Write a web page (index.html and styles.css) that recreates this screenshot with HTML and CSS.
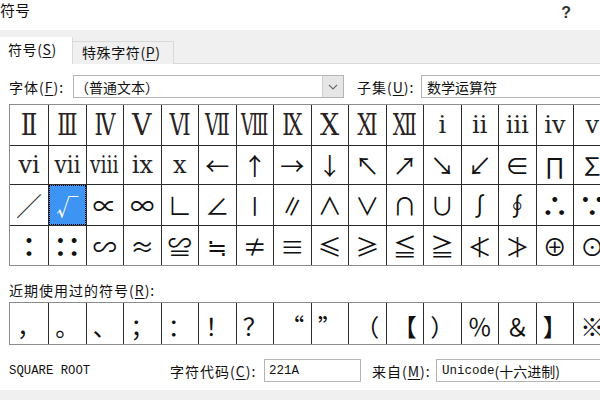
FILE: index.html
```html
<!DOCTYPE html>
<html lang="zh-CN">
<head>
<meta charset="utf-8">
<title>符号</title>
<link rel="stylesheet" href="styles.css">
</head>
<body>
<div class="dialog">
  <div class="titlebar">
    <span class="title">符号</span>
    <span class="help">?</span>
  </div>
  <div class="tabs">
    <div class="tab active">符号(<u>S</u>)</div>
    <div class="tab">特殊字符(<u>P</u>)</div>
  </div>
  <div class="panel">
    <div class="fontrow">
      <span class="lbl font-lbl">字体(<u>F</u>):</span>
      <div class="select font-select">
        <span class="sel-text">（普通文本）</span>
        <span class="drop"><svg width="10" height="6" viewBox="0 0 10 6"><polyline points="1,1 5,5 9,1" fill="none" stroke="#6b6b6b" stroke-width="1.1"/></svg></span>
      </div>
      <span class="lbl subset-lbl">子集(<u>U</u>):</span>
      <div class="field subset">数学运算符</div>
    </div>

    <div class="grid">
      <div class="c rn"><span class="s1">Ⅱ</span></div><div class="c rn"><span class="s2">Ⅲ</span></div><div class="c rn"><span class="s2">Ⅳ</span></div><div class="c rn"><span class="s0">Ⅴ</span></div><div class="c rn"><span class="s2">Ⅵ</span></div><div class="c rn"><span class="s3">Ⅶ</span></div><div class="c rn"><span class="s4">Ⅷ</span></div><div class="c rn"><span class="s2">Ⅸ</span></div><div class="c rn"><span class="s0">Ⅹ</span></div><div class="c rn"><span class="s2">Ⅺ</span></div><div class="c rn"><span class="s3">Ⅻ</span></div><div class="c rs">ⅰ</div><div class="c rs">ⅱ</div><div class="c rs">ⅲ</div><div class="c rs">ⅳ</div><div class="c rs">ⅴ</div>
      <div class="c rs">ⅵ</div><div class="c rs"><span class="t1">ⅶ</span></div><div class="c rs"><span class="t2">ⅷ</span></div><div class="c rs">ⅸ</div><div class="c rs">ⅹ</div><div class="c">←</div><div class="c">↑</div><div class="c">→</div><div class="c">↓</div><div class="c">↖</div><div class="c">↗</div><div class="c">↘</div><div class="c">↙</div><div class="c">∈</div><div class="c">∏</div><div class="c">∑</div>
      <div class="c slash">∕</div><div class="c sel"><span class="focus">√</span></div><div class="c">∝</div><div class="c">∞</div><div class="c">∟</div><div class="c">∠</div><div class="c bar">∣</div><div class="c">∥</div><div class="c">∧</div><div class="c">∨</div><div class="c">∩</div><div class="c">∪</div><div class="c">∫</div><div class="c">∮</div><div class="c dots">∴</div><div class="c dots">∵</div>
      <div class="c dots">∶</div><div class="c dots">∷</div><div class="c">∽</div><div class="c">≈</div><div class="c">≌</div><div class="c">≒</div><div class="c">≠</div><div class="c">≡</div><div class="c">≤</div><div class="c">≥</div><div class="c">≦</div><div class="c">≧</div><div class="c">≮</div><div class="c">≯</div><div class="c">⊕</div><div class="c">⊙</div>
    </div>

    <div class="lbl recent-lbl">近期使用过的符号(<u>R</u>):</div>
    <div class="recent">
      <div class="rc">，</div><div class="rc">。</div><div class="rc">、</div><div class="rc">；</div><div class="rc">：</div><div class="rc">！</div><div class="rc">？</div><div class="rc">“</div><div class="rc">”</div><div class="rc">（</div><div class="rc">【</div><div class="rc">）</div><div class="rc">％</div><div class="rc">＆</div><div class="rc">】</div><div class="rc">※</div>
    </div>

    <div class="info">
      <span class="charname">SQUARE ROOT</span>
      <span class="lbl code-lbl">字符代码(<u>C</u>):</span>
      <div class="field code">221A</div>
      <span class="lbl from-lbl">来自(<u>M</u>):</span>
      <div class="field from"><span class="mono">Unicode</span>(十六进制)</div>
    </div>
  </div>
  <div class="footer"></div>
</div>
</body>
</html>
```
FILE: styles.css
```css
* { box-sizing: border-box; margin: 0; padding: 0; }
html, body { width: 600px; height: 400px; overflow: hidden; background: #fff; }
body { font-family: "Noto Sans CJK SC", "Noto Sans", sans-serif; font-size: 14px; color: #111; }
u { text-decoration: underline; text-underline-offset: 2px; }

.dialog { width: 600px; height: 400px; display: flex; flex-direction: column; overflow: hidden; }

.titlebar { height: 30px; flex: none; display: flex; align-items: flex-start; justify-content: space-between; }
.title { font-size: 15px; line-height: 20px; }
.help { font-family: "Liberation Sans", sans-serif; font-weight: bold; font-size: 16px; line-height: 26px; color: #333; margin-right: 29px; }

.tabs { height: 34px; flex: none; background: #f0f0f0; border-bottom: 1px solid #d9d9d9; display: flex; align-items: flex-end; }
.tab { height: 23px; margin-bottom: -1px; border-top: 1px solid #d9d9d9; border-right: 1px solid #d9d9d9; background: #f0f0f0; font-size: 14px; line-height: 21px; padding-left: 9px; width: 101px; letter-spacing: 0.6px; }
.tab.active { height: 27px; width: 73px; background: #fff; padding-left: 8px; line-height: 25px; border-top: none; }

.panel { flex: 1; display: flex; flex-direction: column; padding-left: 9px; overflow: hidden; }

.fontrow { margin-top: 11px; height: 23px; display: flex; align-items: center; flex: none; }
.lbl { font-size: 14px; line-height: 20px; white-space: nowrap; flex: none; letter-spacing: 1px; }
.font-lbl { width: 64px; }
.select { height: 23px; border: 1px solid #b4b4b4; display: flex; align-items: center; flex: none; }
.font-select { width: 271px; justify-content: space-between; }
.sel-text { font-size: 14px; line-height: 20px; padding-left: 1px; }
.drop { width: 21px; height: 21px; background: #e6e6e6; border-left: 1px solid #cfcfcf; display: flex; align-items: center; justify-content: center; }
.subset-lbl { margin-left: 13px; width: 64px; }
.field { height: 23px; border: 1px solid #b4b4b4; flex: none; display: flex; align-items: center; }
.subset { width: 200px; padding-left: 5px; font-size: 14px; }

.grid { margin-top: 6px; width: max-content; flex: none; display: grid; grid-template-columns: 38px repeat(15, 36.5px); grid-template-rows: 40px 38px 40px 39px; gap: 1px; background: #2b2b2b; border: 1px solid #8c8c8c; }
.c { background: #fff; display: flex; align-items: center; justify-content: center; font-family: "Noto Sans CJK SC", sans-serif; font-size: 24px; line-height: 1; color: #111; overflow: hidden; }
.c span { display: inline-block; }
.c.rn { font-family: "DejaVu Serif", "Liberation Serif", serif; font-size: 30px; color: #2a2222; }
.rn .s0 { transform: scaleX(0.9); }
.rn .s1 { transform: scaleX(0.82); }
.rn .s2 { transform: scaleX(0.7); }
.rn .s3 { transform: scaleX(0.64); }
.rn .s4 { transform: scaleX(0.58); }
.c.rs { font-family: "DejaVu Serif", "Liberation Serif", serif; font-size: 24px; color: #222; }
.rs .t1 { transform: scaleX(0.9); }
.rs .t2 { transform: scaleX(0.78); }
.c.slash { font-size: 26px; color: #333; }
.c.bar { font-size: 26px; }
.c.dots { font-size: 28px; font-weight: bold; }
.c.sel { background: #3d94f2; color: #fff; padding: 0; font-size: 22px; }
.c.sel .focus { width: 100%; height: 100%; border: 1px dotted #000; display: flex; align-items: center; justify-content: center; }

.recent-lbl { margin-top: 14px; }
.recent { margin-top: 2px; width: max-content; flex: none; display: grid; grid-template-columns: 38px repeat(15, 36.5px); grid-template-rows: 41px; gap: 1px; background: #2b2b2b; border: 1px solid #8c8c8c; border-right: none; }
.rc { background: #fff; display: flex; align-items: flex-end; justify-content: center; font-family: "Noto Sans CJK SC", sans-serif; font-size: 24px; line-height: 36px; color: #111; }

.info { margin-top: 14px; height: 23px; display: flex; align-items: center; flex: none; }
.charname { font-family: "Liberation Mono", monospace; font-size: 12.3px; width: 161px; flex: none; }
.code-lbl { width: 94px; }
.code { width: 97px; padding-left: 4px; font-family: "Liberation Mono", monospace; font-size: 12.5px; }
.from-lbl { margin-left: 11px; width: 64px; }
.from { width: 200px; padding-left: 5px; font-size: 14px; }
.mono { font-family: "Liberation Mono", monospace; font-size: 12.5px; }

.footer { height: 10px; flex: none; background: #f0f0f0; }
```
